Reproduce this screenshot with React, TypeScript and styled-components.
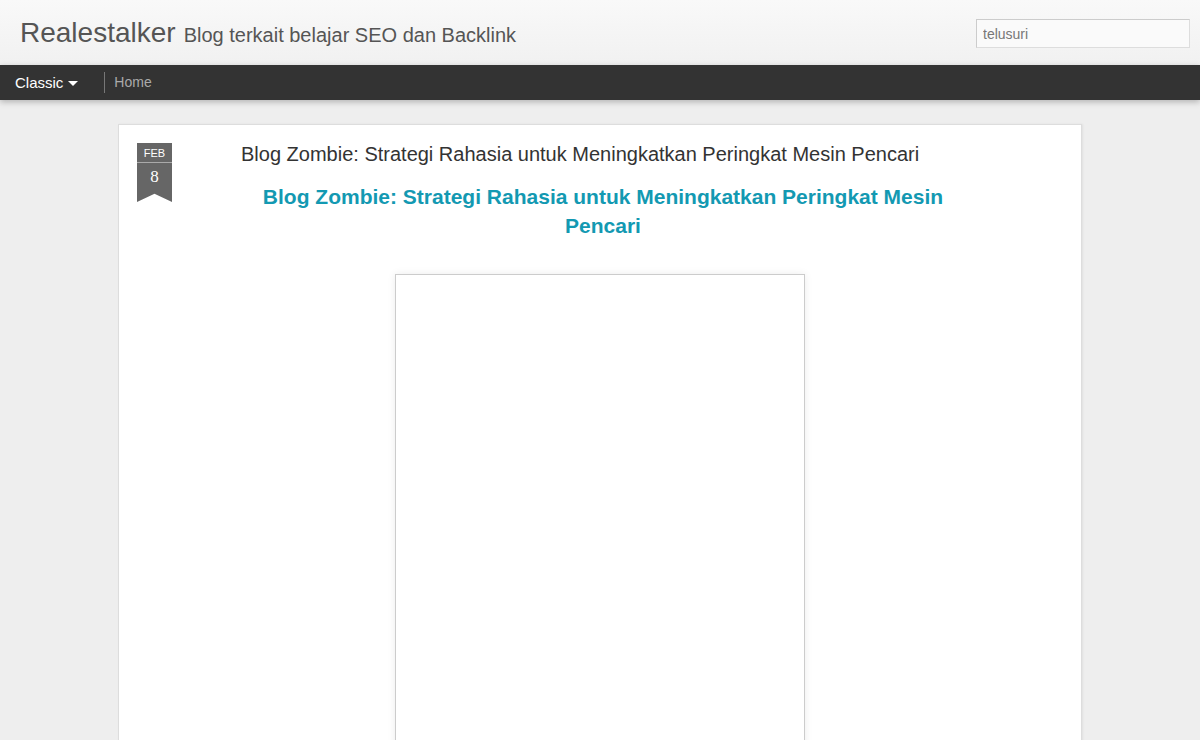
import styled, { createGlobalStyle } from "styled-components";

const Global = createGlobalStyle`
    html, body {
        margin:0;
        padding:0;
        background:#eeeeee;
        font-family:"Liberation Sans", Arial, sans-serif;
        overflow:hidden;
    }
`

const Header = styled.header`
    height:65px;
    background:linear-gradient(#f9f9f9, #f1f1f1);
    display:flex;
    align-items:center;
    justify-content:space-between;
    padding:0 10px 0 20px;
`

const Brand = styled.div`
    display:flex;
    align-items:baseline;
    gap:8px;
    color:#555;
`

const Title = styled.h1`
    margin:0;
    font-size:28px;
    font-weight:normal;
`

const Subtitle = styled.span`
    font-size:20px;
`

const Search = styled.input`
    width:214px;
    height:29px;
    box-sizing:border-box;
    border:1px solid #ddd;
    border-top-color:#ccc;
    border-left-color:#ccc;
    background:#fafafa;
    padding:0 6px;
    font-family:"Liberation Sans", Arial, sans-serif;
    font-size:14px;
    color:#777;
    outline:none;
    margin-top:2px;
    &::placeholder { color:#777; }
`

const Nav = styled.nav`
    height:35px;
    background:#333;
    display:flex;
    align-items:center;
    box-shadow:0 2px 6px rgba(0,0,0,0.25);
    position:relative;
`

const ViewMenu = styled.div`
    color:#fff;
    font-size:15px;
    padding:0 26px 0 15px;
    display:flex;
    align-items:center;
    gap:5px;
`

const Caret = styled.span`
    width:0;
    height:0;
    border-left:5px solid transparent;
    border-right:5px solid transparent;
    border-top:5px solid #fff;
    margin-top:2px;
`

const NavLink = styled.a`
    color:#aaa;
    font-size:14px;
    border-left:1px solid #777;
    padding:2px 0 2px 9px;
    line-height:17px;
`

const Main = styled.main`
    padding:24px 0 0;
    display:flex;
    justify-content:center;
`

const Card = styled.article`
    width:962px;
    height:700px;
    background:#fff;
    border:1px solid #ddd;
    box-shadow:1px 0 2px rgba(0,0,0,0.06);
    display:grid;
    grid-template-columns:104px 1fr;
`

const DateCol = styled.div`
    padding:18px 0 0 18px;
`

const Ribbon = styled.div`
    width:35px;
    height:59px;
    background:#666;
    color:#fff;
    text-align:center;
    clip-path:polygon(0 0, 100% 0, 100% 100%, 50% 86%, 0 100%);
`

const Month = styled.div`
    font-size:11px;
    height:19px;
    line-height:20px;
    border-bottom:1px solid #aaa;
`

const Day = styled.div`
    font-size:17px;
    line-height:28px;
    font-family:"Liberation Serif", serif;
`

const Body = styled.div`
    padding:18px 0 0;
`

const PostTitle = styled.h2`
    margin:0 0 0 18px;
    font-size:20px;
    font-weight:normal;
    color:#333;
    line-height:22px;
`

const Heading = styled.h3`
    margin:17px 0 0 30px;
    width:700px;
    text-align:center;
    color:#1399b2;
    font-size:21px;
    line-height:29px;
    font-weight:bold;
`

const Figure = styled.div`
    width:408px;
    height:500px;
    margin:34px 0 0 172px;
    border:1px solid #ccc;
    box-shadow:0 0 8px rgba(0,0,0,0.08);
    background:#fff;
`

export default function App() {
    return <>
        <Global />
        <Header>
            <Brand>
                <Title>Realestalker</Title>
                <Subtitle>Blog terkait belajar SEO dan Backlink</Subtitle>
            </Brand>
            <Search placeholder="telusuri" />
        </Header>
        <Nav>
            <ViewMenu>Classic <Caret /></ViewMenu>
            <NavLink>Home</NavLink>
        </Nav>
        <Main>
            <Card>
                <DateCol>
                    <Ribbon>
                        <Month>FEB</Month>
                        <Day>8</Day>
                    </Ribbon>
                </DateCol>
                <Body>
                    <PostTitle>Blog Zombie: Strategi Rahasia untuk Meningkatkan Peringkat Mesin Pencari</PostTitle>
                    <Heading>Blog Zombie: Strategi Rahasia untuk Meningkatkan Peringkat Mesin Pencari</Heading>
                    <Figure />
                </Body>
            </Card>
        </Main>
    </>
}
